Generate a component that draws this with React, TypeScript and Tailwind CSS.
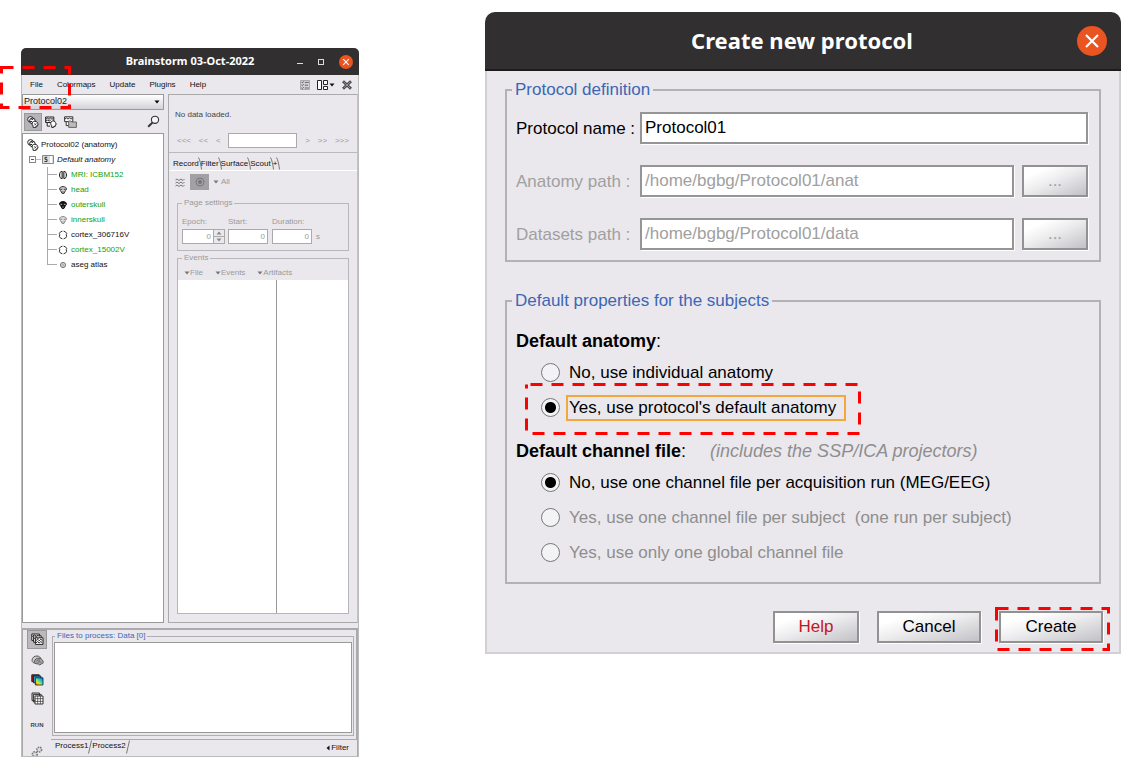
import { useState, type ReactNode } from "react";
import clsx from "clsx";

const Highlight = ({ w, h, offset = 0, className }: { w: number; h: number; offset?: number; className: string }) => (
  <svg
    aria-hidden="true"
    width={w}
    height={h}
    viewBox={`0 0 ${w} ${h}`}
    className={clsx("pointer-events-none absolute z-10", className)}
  >
    <rect
      x="1.5"
      y="1.5"
      width={w - 3}
      height={h - 3}
      fill="none"
      stroke="#ff0000"
      strokeWidth="3"
      strokeDasharray="12 9"
      strokeDashoffset={offset}
    />
  </svg>
);

const CloseIcon = ({ className }: { className: string }) => (
  <svg viewBox="0 0 30 30" className={className}>
    <circle cx="15" cy="15" r="15" fill="#e95420" />
    <path d="M9 9l12 12M21 9L9 21" stroke="#fff" strokeWidth="2.2" />
  </svg>
);

/* ---------- toolbar and tree icons ---------- */

const HeadsIcon = () => (
  <svg viewBox="0 0 12 12" className="size-3" fill="#fff" stroke="#222" strokeWidth="1">
    <circle cx="3.5" cy="3.4" r="2.8" />
    <circle cx="5.4" cy="4.9" r="2.8" />
    <path d="M4.5 3.4h1.6M3.2 5.5h2M5 6.6h2" />
    <path d="M5.6 6.2c1-1.3 3.6-1.3 4.6.1.8 1 .6 1.8.9 2.6l-1 .3-.2 1.6H8.4v.9H6.3l-.4-2.1c-1-1-1-2.4-.3-3.4z" />
    <path d="M7.2 7.4l2.2 2M9.3 7.3L7.3 9.4" strokeWidth=".7" />
  </svg>
);

const ChannelsIcon = () => (
  <svg viewBox="0 0 12 12" className="size-3" fill="#fff" stroke="#222" strokeWidth="1">
    <path d="M.6 1h8.2v5.5H.6z" />
    <path d="M1 3.2l1.4-1.1L4 3.3l1.5-1.2L7 3.3l1.5-1.1M1 5l1.6-.8 1.6.8 1.5-.8" />
    <path d="M2.2 6.5v3.6h3M6.4 5.4c1.6-1 3.7-.4 4.2 1.2l.7 1.8-.9.4-.2 1.6H8.8v1H6.7V9.6c-1.2-1.1-1.2-3-.3-4.2z" />
  </svg>
);

const FolderStackIcon = () => (
  <svg viewBox="0 0 13 12" className="h-3 w-[13px]" fill="#fff" stroke="#333" strokeWidth="1">
    <path d="M.6.8h8.2v4.8H.6z" />
    <path d="M1 3l1.4-1.1L4 3.1l1.5-1.2L7 3.1l1.5-1.1M2.2 5.6v4h3" />
    <path d="M4.7 5h2.4l.7 1h4.6v5.4H4.7z" fill="#bbb" stroke="#666" />
  </svg>
);

const SearchIcon = () => (
  <svg viewBox="0 0 13 13" className="size-[13px]" fill="none" stroke="#333">
    <circle cx="8" cy="4.8" r="3.6" fill="#f6f6fa" strokeWidth="1.1" />
    <path d="M5.4 7.6L1.2 11.8" strokeWidth="2" />
  </svg>
);

const TaskListIcon = () => (
  <svg viewBox="0 0 10 10" className="size-2.5" fill="none" stroke="#666">
    <path d="M.5.5h9v9h-9z" fill="#d5d3d8" stroke="#aaa" />
    <path d="M1.4 2.2l.9.8 1.4-1.7M1.4 5l.9.8 1.4-1.7M1.4 7.9l.9.8L3.7 7M4.8 2.4h4M4.8 5.2h3.2M4.8 8h4" />
  </svg>
);

const LayoutIcon = () => (
  <svg viewBox="0 0 11 10" className="h-2.5 w-[11px]" fill="#fff" stroke="#222" strokeWidth="1">
    <path d="M.5.5h4v9h-4zM6.5.5h4v4h-4zM6.5 6.5h4v3h-4z" />
  </svg>
);

const CrossIcon = () => (
  <svg viewBox="0 0 10 10" className="size-2.5" fill="none">
    <path d="M1 1.2l8 7.6M9 1.2L1 8.8" stroke="#444" strokeWidth="2.8" />
    <path d="M1.6 1.8l6.8 6.4M8.4 1.8L1.6 8.2" stroke="#999" strokeWidth="1" />
  </svg>
);

const Caret = ({ className }: { className?: string }) => (
  <svg viewBox="0 0 6 4" className={clsx("h-1 w-1.5", className)} fill="currentColor">
    <path d="M.5.5h5L3 3.5z" />
  </svg>
);

const SubjectIcon = () => (
  <svg viewBox="0 0 12 9" className="h-[9px] w-3">
    <path d="M.5.5h11v8H.5z" fill="#ddd" stroke="#888" />
    <path d="M8 1h2v7H8z" fill="#fff" />
    <path d="M5.2 2.3H3v2h2v2.2H2.5" fill="none" stroke="#333" />
  </svg>
);

const MriIcon = () => (
  <svg viewBox="0 0 10 10" className="size-2.5" fill="#ddd" stroke="#222">
    <path d="M4.2 1.4C2.3 1.2 1.5 3 1.5 5s.8 3.8 2.7 3.6zM5.8 1.4C7.7 1.2 8.5 3 8.5 5s-.8 3.8-2.7 3.6z" />
  </svg>
);

const SkullIcon = ({ fill, stroke }: { fill: string; stroke: string }) => (
  <svg viewBox="0 0 10 10" className="size-2.5" fill={fill} stroke={stroke}>
    <path d="M1.6 4C1.6 2.4 3 1.6 5 1.6S8.4 2.4 8.4 4c0 1.2-.6 1.4-1.1 1.8L6 8.4H4L2.7 5.8C2.2 5.4 1.6 5.2 1.6 4z" />
    <path d="M2.4 4.3h1.8M5.8 4.3h1.8M4.4 7h1.2" stroke={fill === "#111" ? "#bbb" : stroke} />
  </svg>
);

const CortexIcon = () => (
  <svg viewBox="0 0 10 10" className="size-2.5" fill="#fff" stroke="#333">
    <path d="M4.4 1.2L2.6 1.8 1.3 3.4l.5 1.4-.5 1.5 1.1 1.7 2 .8M5.6 1.2l1.8.6 1.3 1.6-.5 1.4.5 1.5L7.6 8l-2 .8" />
  </svg>
);

const AtlasIcon = () => (
  <svg viewBox="0 0 10 10" className="size-2.5" fill="#ddd" stroke="#777">
    <circle cx="5" cy="5" r="2.6" />
    <path d="M5 3.4v3.2M3.6 5h2.8" stroke="#aaa" />
  </svg>
);

const WavesIcon = () => (
  <svg viewBox="0 0 10 9" className="h-[9px] w-2.5" fill="none" stroke="#777">
    <path d="M.5 2L2 1l2 1.5L6 1l2 1.5L9.5 1M.5 5L2 4l2 1.5L6 4l2 1.5L9.5 4M.5 8L2 7l2 1.5L6 7l2 1.5L9.5 7" />
  </svg>
);

const DataStackIcon = () => (
  <svg viewBox="0 0 13 13" className="size-[13px]" fill="#fff" stroke="#222">
    <path d="M.8 1h7.6v6.4H.8z" />
    <path d="M2.6 2.8h7.6v6.4H2.6z" />
    <path d="M4.4 4.8H12v6.6H4.4z" />
    <path d="M1.2 3.6l2-1.8 2 1.6 2-1.6M3 5.6l2-1.8 2 1.6 2-1.6M5 7.6l1.6-1.4 1.6 1.6 1.6-1.6 1.6 1.4M5 9.8l1.6-1.2 1.6 1.2 1.6-1.2 1.6 1.2" />
  </svg>
);

const BrainStackIcon = () => (
  <svg viewBox="0 0 13 11" className="h-[11px] w-[13px]" stroke="#555" fill="#ccc">
    <path d="M1 5.4C1 2.6 3.6.8 6 1c2.2.1 3.6 1.4 3.9 3L5 8.2C2.8 8.4 1 7.2 1 5.4z" />
    <path d="M3.4 6.8C3.5 4.4 5.8 3 8 3.2c2.6.2 4.2 2.2 4.2 4.2 0 1-.8 1.6-1.8 1.4L8.8 10c-1-.8-1.6-1.2-2.8-1.2-1.4 0-2.6-.8-2.6-2z" fill="#aaa" />
    <path d="M5 6.6c1-1.4 2.4-1.8 4-1.4M6.6 7.6c1-.8 2.2-.8 3.6-.2" />
  </svg>
);

const TimefreqIcon = () => (
  <svg viewBox="0 0 13 12" className="h-3 w-[13px]">
    <defs>
      <linearGradient id="jet" x1="0" y1="1" x2="1" y2="0">
        <stop offset="0" stopColor="#e84010" />
        <stop offset=".3" stopColor="#ffe000" />
        <stop offset=".55" stopColor="#30e0c0" />
        <stop offset="1" stopColor="#1060f0" />
      </linearGradient>
    </defs>
    <path d="M.8.8h7.4v6.8H.8z" fill="#c01010" stroke="#222" />
    <path d="M2.4 2h7.4v6.8H2.4z" fill="#20a0e0" stroke="#222" />
    <path d="M4.4 3.8H12v7.2H4.4z" fill="url(#jet)" stroke="#222" strokeWidth=".8" />
  </svg>
);

const MatrixIcon = () => (
  <svg viewBox="0 0 13 13" className="size-[13px]" fill="#ddd" stroke="#333">
    <path d="M1 1h7.4v7.6H1zM2.4 2.4h7.8V10H2.4z" />
    <path d="M4 4h8v8H4z" fill="#fff" />
    <path d="M6.7 4v8M9.4 4v8M4 6.7h8M4 9.4h8" strokeWidth=".7" />
  </svg>
);

const GearsIcon = () => (
  <svg viewBox="0 0 12 12" className="size-3" fill="#ddd" stroke="#777">
    <circle cx="8.2" cy="3.6" r="2.4" strokeDasharray="1.4 .8" strokeWidth="1.6" />
    <circle cx="3.8" cy="8.2" r="2.4" strokeDasharray="1.4 .8" strokeWidth="1.6" />
  </svg>
);

/* ---------- main window ---------- */

const treeItems = [
  { label: "MRI: ICBM152", icon: <MriIcon />, green: true },
  { label: "head", icon: <SkullIcon fill="#ccc" stroke="#333" />, green: true },
  { label: "outerskull", icon: <SkullIcon fill="#111" stroke="#111" />, green: true },
  { label: "innerskull", icon: <SkullIcon fill="#ddd" stroke="#888" />, green: true },
  { label: "cortex_306716V", icon: <CortexIcon />, green: false },
  { label: "cortex_15002V", icon: <CortexIcon />, green: true },
  { label: "aseg atlas", icon: <AtlasIcon />, green: false },
];

const AnatomyTree = () => (
  <ul className="min-h-[490px] flex-1 border border-[#999] bg-white pt-[3px] leading-[15px] text-[#111]">
    <li>
      <div className="flex h-[15px] items-center gap-0.5 pl-1">
        <HeadsIcon />
        Protocol02 (anatomy)
      </div>
      <ul>
        <li>
          <div className="flex h-[15px] items-center pl-1.5 italic">
            <span className="flex size-[7px] items-center border border-[#888] px-px">
              <span className="h-px w-full bg-[#555]" />
            </span>
            <span className="mr-px h-px w-[5px] bg-[#bbb]" />
            <SubjectIcon />
            <span className="ml-[3px]">Default anatomy</span>
          </div>
          <ul>
            {treeItems.map((item, i) => (
              <li key={item.label} className="flex h-[15px] items-center pl-6">
                <span className="mr-px h-full w-2.5">
                  <span className="block h-2 border-b border-l border-[#aaa]" />
                  {i < treeItems.length - 1 && <span className="block h-[7px] border-l border-[#aaa]" />}
                </span>
                {item.icon}
                <span className={clsx("ml-[3px]", item.green && "text-[#0da30d]")}>{item.label}</span>
              </li>
            ))}
          </ul>
        </li>
      </ul>
    </li>
  </ul>
);

const TabEdge = () => (
  <svg viewBox="0 0 4 13" className="-mx-px h-[13px] w-1" fill="none" stroke="#777">
    <path d="M.5.5C2 3 3 8 3.5 12.5" />
  </svg>
);

const RecordPanel = () => (
  <section className="flex flex-col border border-[#aaa] border-r-[#c4c2c8] text-[#999]">
    <div className="h-[58px] border-b border-[#bbb] pt-3.5">
      <p className="pl-1.5 leading-3 text-[#444]">No data loaded.</p>
      <div className="mt-3 flex items-center justify-between pr-2 pl-2">
        <button>&lt;&lt;&lt;</button>
        <button>&lt;&lt;</button>
        <button>&lt;</button>
        <input aria-label="Current time" className="h-[15px] w-[69px] border border-[#aaa] bg-white" />
        <button>&gt;</button>
        <button>&gt;&gt;</button>
        <button>&gt;&gt;&gt;</button>
      </div>
    </div>

    <div role="tablist" className="mt-1 flex h-[14px] items-center border-b border-white pl-1 text-[#111]">
      {["Record", "Filter", "Surface", "Scout", "+"].map((t) => (
        <span key={t} className="flex items-center">
          <button role="tab" aria-selected={t === "Record"}>{t}</button>
          <TabEdge />
        </span>
      ))}
    </div>

    <div className="mt-[3px] flex h-4 items-center pl-1.5">
      <WavesIcon />
      <button aria-label="Display mode" className="ml-[5px] flex h-4 w-[19px] items-center justify-center bg-[#a2a0a5]">
        <svg viewBox="0 0 10 10" className="size-2.5" fill="none" stroke="#777">
          <circle cx="5" cy="5" r="4" />
          <circle cx="5" cy="5" r="1.6" fill="#777" />
        </svg>
      </button>
      <button className="ml-1 flex items-center gap-0.5">
        <Caret className="text-[#777]" /> All
      </button>
    </div>

    <fieldset className="mx-2 mt-2 border border-[#b8b6bb] px-1 pb-1.5">
      <legend className="px-0.5 leading-[10px]">Page settings</legend>
      <div className="flex items-end pt-1.5">
        <label className="leading-[15px]">
          Epoch:
          <span className="flex h-[15px]">
            <input defaultValue="0" className="w-8 border border-[#aaa] bg-white pr-0.5 text-right" />
            <span className="flex w-[11px] flex-col border border-l-0 border-[#aaa] text-[#888]">
              <button aria-label="Increase" className="flex flex-1 items-center justify-center border-b border-[#aaa]">
                <Caret className="rotate-180" />
              </button>
              <button aria-label="Decrease" className="flex flex-1 items-center justify-center">
                <Caret />
              </button>
            </span>
          </span>
        </label>
        <label className="ml-[3px] leading-[15px]">
          Start:
          <input defaultValue="0" className="block h-[15px] w-10 border border-[#aaa] bg-white pr-0.5 text-right" />
        </label>
        <label className="ml-1 leading-[15px]">
          Duration:
          <input defaultValue="0" className="block h-[15px] w-10 border border-[#aaa] bg-white pr-0.5 text-right" />
        </label>
        <span className="ml-1 leading-[15px]">s</span>
      </div>
    </fieldset>

    <fieldset className="mx-2 mt-0.5 mb-2 flex flex-1 flex-col border border-[#b8b6bb]">
      <legend className="ml-1 px-0.5 leading-[10px]">Events</legend>
      <div className="flex h-full flex-col">
        <div className="flex h-[17px] shrink-0 items-center gap-3 pt-0.5 pl-1.5">
          {["File", "Events", "Artifacts"].map((m) => (
            <button key={m} className="flex items-center">
              <Caret className="text-[#777]" />
              {m}
            </button>
          ))}
        </div>
        <div className="grid flex-1 grid-cols-[100fr_71fr] bg-white">
          <div className="border-r border-[#999]" />
          <div />
        </div>
      </div>
    </fieldset>
  </section>
);

const processTools: { name: string; icon: ReactNode; className?: string }[] = [
  { name: "Process recordings", icon: <DataStackIcon />, className: "mb-0.5 border border-[#999] bg-[#bbb9be]" },
  { name: "Process sources", icon: <BrainStackIcon /> },
  { name: "Process time-frequency", icon: <TimefreqIcon /> },
  { name: "Process matrix", icon: <MatrixIcon /> },
];

const ProcessPanel = () => (
  <section className="mt-[5px] flex border-x border-t-2 border-[#aaa]">
    <div className="flex w-7 flex-col items-center">
      {processTools.map((tool) => (
        <button
          key={tool.name}
          aria-label={tool.name}
          className={clsx("flex h-[19px] w-5 items-center justify-center", tool.className)}
        >
          {tool.icon}
        </button>
      ))}
      <button className="mt-3 text-[6px] leading-[10px] font-bold text-[#444]">RUN</button>
      <button aria-label="Pipeline editor" className="mt-4 h-2.5 overflow-hidden">
        <GearsIcon />
      </button>
    </div>
    <div className="flex flex-1 flex-col">
      <div className="border-r border-b border-[#aaa] pr-0.5 pb-[3px] pl-px">
        <fieldset className="border border-[#b0aeb4] px-px pb-0.5">
          <legend className="ml-px px-0.5 leading-[12px] text-[#3c66b4]">Files to process: Data [0]</legend>
          <div className="h-[91px] border border-[#999] bg-white" />
        </fieldset>
      </div>
      <div className="flex h-4 items-start pl-1 leading-3 text-[#111]">
        <button>Process1</button>
        <svg viewBox="0 0 4 14" className="h-3.5 w-1" fill="none" stroke="#777">
          <path d="M3.5.5L.5 13.5" />
        </svg>
        <button>Process2</button>
        <svg viewBox="0 0 4 14" className="h-3.5 w-1" fill="none" stroke="#777">
          <path d="M3.5.5L.5 13.5" />
        </svg>
        <button className="mt-0.5 mr-2 ml-auto flex items-center">
          <Caret className="rotate-90" />
          Filter
        </button>
      </div>
    </div>
  </section>
);

const MainWindow = () => (
  <main className="relative mt-9 min-w-0 flex-[338] font-['Liberation_Sans',sans-serif] text-[8px]">
    <header className="flex h-[27px] items-center rounded-t-[5px] bg-[#322f30] pr-1.5 text-white">
      <h1 className="flex-1 pl-[76px] text-center font-['Noto_Sans',sans-serif] text-[11px] font-bold">
        Brainstorm 03-Oct-2022
      </h1>
      <div className="flex w-[70px] items-center justify-end gap-[15px]">
        <button aria-label="Minimize" className="mt-1 h-px w-1.5 bg-[#ddd]" />
        <button aria-label="Maximize" className="size-1.5 border border-[#ddd]" />
        <button aria-label="Close">
          <CloseIcon className="size-3.5" />
        </button>
      </div>
    </header>

    <div className="border-x border-b border-[#bbb] bg-[#eae8ed]">
      <nav className="flex h-[19px] items-center pr-1.5 pl-2 text-[#111]">
        <div className="flex gap-3.5">
          <button>File</button>
          <button>Colormaps</button>
          <button>Update</button>
          <button>Plugins</button>
          <button>Help</button>
        </div>
        <div className="ml-auto flex items-center gap-[7px]">
          <button aria-label="Tasks"><TaskListIcon /></button>
          <button aria-label="Window layout" className="flex items-center gap-px">
            <LayoutIcon />
            <Caret />
          </button>
          <button aria-label="Close all"><CrossIcon /></button>
        </div>
      </nav>

      <div className="grid grid-cols-[142fr_190fr] gap-1">
        <div className="flex flex-col">
          <div className="relative">
            <select
              aria-label="Protocol"
              className="block h-4 w-full appearance-none border border-[#999] bg-linear-to-b from-white to-[#d4d2d8] pl-px text-[9px] text-[#222]"
            >
              <option>Protocol02</option>
            </select>
            <Caret className="pointer-events-none absolute top-1.5 right-1 text-black" />
          </div>
          <div className="flex h-[23px] items-center gap-[7px] pr-1 pl-0.5">
            <button aria-label="Anatomy view" className="flex size-[18px] items-center justify-center border border-[#999] bg-[#b5b3b8]">
              <HeadsIcon />
            </button>
            <button aria-label="Functional data by subject" className="-ml-1"><ChannelsIcon /></button>
            <button aria-label="Functional data by condition"><FolderStackIcon /></button>
            <button aria-label="Search" className="ml-auto"><SearchIcon /></button>
          </div>
          <AnatomyTree />
        </div>
        <RecordPanel />
      </div>
      <ProcessPanel />
    </div>
    <Highlight w={71} h={43} className="top-[18px] -left-[21px]" />
  </main>
);

/* ---------- protocol dialog ---------- */

const PushButton = ({ children, className, ...rest }: React.ComponentProps<"button">) => (
  <button
    className={clsx(
      "h-8 border-2 border-[#929292] bg-linear-to-br from-white from-20% via-[#ebebed] to-[#c2c1c6] shadow-[1px_1px_0_#fff]",
      className
    )}
    {...rest}
  >
    {children}
  </button>
);

const Field = ({ id, label, value, browse }: { id: string; label: string; value: string; browse?: boolean }) => (
  <div className={clsx("flex items-center", browse && "text-[#a0a0a0]")}>
    <label htmlFor={id} className="w-31 shrink-0 pt-0.5">{label}</label>
    <input
      id={id}
      defaultValue={value}
      disabled={browse}
      className="h-8 min-w-0 flex-1 border-2 border-[#959595] bg-white pl-[3px] shadow-[1px_1px_0_#fff]"
    />
    {browse && (
      <PushButton disabled aria-label={`Browse ${label}`} className="ml-2 w-[66px]">
        ...
      </PushButton>
    )}
  </div>
);

interface RadioProps {
  name: string;
  label: string;
  checked: boolean;
  onChange?: () => void;
  disabled?: boolean;
  focused?: boolean;
}

const Radio = ({ name, label, checked, onChange, disabled, focused }: RadioProps) => (
  <label className={clsx("flex h-[35px] items-center pl-[25px]", disabled && "text-[#8e8e8e]")}>
    <input
      type="radio"
      name={name}
      checked={checked}
      onChange={onChange}
      disabled={disabled}
      className="mr-1.5 size-[19px] appearance-none rounded-full border border-[#777] bg-[#f3f2f5] checked:bg-[radial-gradient(circle,#000_5px,#f3f2f5_6px)]"
    />
    <span
      className={clsx(
        "border-2 pl-px leading-[22px] whitespace-pre",
        focused ? "border-[#f2a93b] pr-2" : "border-transparent"
      )}
    >
      {label}
    </span>
  </label>
);

const ProtocolDialog = () => {
  const [defaultAnatomy, setDefaultAnatomy] = useState(true);

  return (
    <div role="dialog" aria-labelledby="dialog-title" className="min-w-0 flex-[636] font-['Liberation_Sans',sans-serif] text-[17px]">
      <header className="flex h-[59px] items-center rounded-t-[10px] border-b-2 border-[#1e1b1c] bg-[#322f30] px-3.5 text-white">
        <h2 id="dialog-title" className="flex-1 pl-7 text-center font-['Noto_Sans',sans-serif] text-[22px] font-bold">
          Create new protocol
        </h2>
        <button aria-label="Close">
          <CloseIcon className="size-[30px]" />
        </button>
      </header>

      <form className="border-2 border-t-0 border-[#d2d0d4] bg-[#eae8ed] px-[18px] pt-[7px] pb-[9px]" onSubmit={(e) => e.preventDefault()}>
        <fieldset className="border-2 border-[#b3b1b6] pr-[11px] pb-2.5 pl-[9px]">
          <legend className="-ml-1 px-[3px] leading-6 text-[#3c66b4]">Protocol definition</legend>
          <div className="flex flex-col gap-[21px] pt-2.5">
            <Field id="protocol-name" label="Protocol name :" value="Protocol01" />
            <Field id="anat-path" label="Anatomy path :" value="/home/bgbg/Protocol01/anat" browse />
            <Field id="data-path" label="Datasets path :" value="/home/bgbg/Protocol01/data" browse />
          </div>
        </fieldset>

        <fieldset className="mt-[27px] border-2 border-[#b3b1b6] pr-[11px] pb-3 pl-[9px]">
          <legend className="-ml-1 px-[3px] leading-6 text-[#3c66b4]">Default properties for the subjects</legend>
          <h3 className="mt-3.5 text-[18px] leading-7"><b>Default anatomy</b>:</h3>
          <div className="relative">
            <Radio name="anatomy" label="No, use individual anatomy" checked={!defaultAnatomy} onChange={() => setDefaultAnatomy(false)} />
            <Radio name="anatomy" label="Yes, use protocol's default anatomy" checked={defaultAnatomy} onChange={() => setDefaultAnatomy(true)} focused />
            <Highlight w={336} h={52} offset={-4} className="top-7 left-[9px]" />
          </div>
          <h3 className="mt-3 text-[18px] leading-7">
            <b>Default channel file</b>:
            <i className="ml-6 text-[#8e8e8e]">(includes the SSP/ICA projectors)</i>
          </h3>
          <Radio name="channel" label="No, use one channel file per acquisition run (MEG/EEG)" checked onChange={() => {}} />
          <Radio name="channel" label="Yes, use one channel file per subject  (one run per subject)" checked={false} disabled />
          <Radio name="channel" label="Yes, use only one global channel file" checked={false} disabled />
        </fieldset>

        <div className="-mr-0.5 mt-[27px] flex justify-end gap-[18px]">
          <PushButton type="button" className="w-[86px] text-[#c4161c]">Help</PushButton>
          <PushButton type="button" className="w-[104px]">Cancel</PushButton>
          <div className="relative">
            <PushButton type="submit" className="w-[104px]">Create</PushButton>
            <Highlight w={115} h={44} className="-top-1 -left-1" />
          </div>
        </div>
      </form>
    </div>
  );
};

export default function App() {
  return (
    <div className="flex min-h-screen items-start gap-[126px] bg-white pt-3 pr-[15px] pl-[21px]">
      <MainWindow />
      <ProtocolDialog />
    </div>
  );
}
